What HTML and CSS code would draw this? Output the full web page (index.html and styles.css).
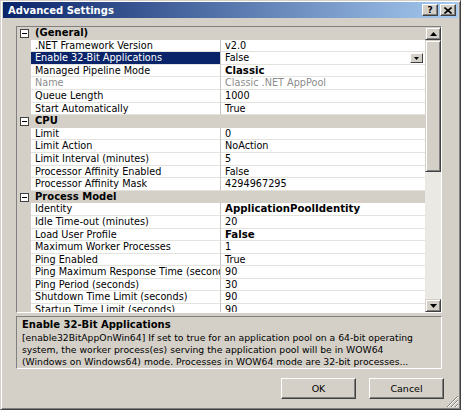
FILE: index.html
```html
<!DOCTYPE html>
<html lang="en">
<head>
  <meta charset="UTF-8">
  <meta name="viewport" content="width=device-width, initial-scale=1.0">
  <title>Advanced Settings</title>
  <link rel="stylesheet" href="styles.css">
</head>
<body>
  <div class="dialog">
    <div class="titlebar">
      <span class="title">Advanced Settings</span>
      <span class="caption-buttons">
        <span class="caption-btn help">?</span>
        <span class="caption-btn close">
          <svg width="8" height="7" viewBox="0 0 8 7"><path d="M0.5 0.5 L7.5 6.5 M7.5 0.5 L0.5 6.5" stroke="#000" stroke-width="1.6"/></svg>
        </span>
      </span>
    </div>

    <div class="dialog-body">
      <!-- Property grid -->
      <div class="grid">
        <div class="grid-rows">
          <div class="row category"><span class="gutter"><span class="expander"></span></span><span class="cat-name">(General)</span></div>
          <div class="row"><span class="gutter"></span><span class="name">.NET Framework Version</span><span class="value">v2.0</span></div>
          <div class="row selected"><span class="gutter"></span><span class="name">Enable 32-Bit Applications</span><span class="value">False<span class="drop-btn"><svg width="5" height="3" viewBox="0 0 5 3"><path d="M0 0 H5 L2.5 3 Z" fill="#000"/></svg></span></span></div>
          <div class="row"><span class="gutter"></span><span class="name">Managed Pipeline Mode</span><span class="value bold">Classic</span></div>
          <div class="row disabled"><span class="gutter"></span><span class="name">Name</span><span class="value">Classic .NET AppPool</span></div>
          <div class="row"><span class="gutter"></span><span class="name">Queue Length</span><span class="value">1000</span></div>
          <div class="row"><span class="gutter"></span><span class="name">Start Automatically</span><span class="value">True</span></div>

          <div class="row category"><span class="gutter"><span class="expander"></span></span><span class="cat-name">CPU</span></div>
          <div class="row"><span class="gutter"></span><span class="name">Limit</span><span class="value">0</span></div>
          <div class="row"><span class="gutter"></span><span class="name">Limit Action</span><span class="value">NoAction</span></div>
          <div class="row"><span class="gutter"></span><span class="name">Limit Interval (minutes)</span><span class="value">5</span></div>
          <div class="row"><span class="gutter"></span><span class="name">Processor Affinity Enabled</span><span class="value">False</span></div>
          <div class="row"><span class="gutter"></span><span class="name">Processor Affinity Mask</span><span class="value">4294967295</span></div>

          <div class="row category"><span class="gutter"><span class="expander"></span></span><span class="cat-name">Process Model</span></div>
          <div class="row"><span class="gutter"></span><span class="name">Identity</span><span class="value bold">ApplicationPoolIdentity</span></div>
          <div class="row"><span class="gutter"></span><span class="name">Idle Time-out (minutes)</span><span class="value">20</span></div>
          <div class="row"><span class="gutter"></span><span class="name">Load User Profile</span><span class="value bold">False</span></div>
          <div class="row"><span class="gutter"></span><span class="name">Maximum Worker Processes</span><span class="value">1</span></div>
          <div class="row"><span class="gutter"></span><span class="name">Ping Enabled</span><span class="value">True</span></div>
          <div class="row"><span class="gutter"></span><span class="name">Ping Maximum Response Time (seconds)</span><span class="value">90</span></div>
          <div class="row"><span class="gutter"></span><span class="name">Ping Period (seconds)</span><span class="value">30</span></div>
          <div class="row"><span class="gutter"></span><span class="name">Shutdown Time Limit (seconds)</span><span class="value">90</span></div>
          <div class="row"><span class="gutter"></span><span class="name">Startup Time Limit (seconds)</span><span class="value">90</span></div>
        </div>

        <div class="scrollbar">
          <span class="scroll-btn"><svg width="7" height="4" viewBox="0 0 7 4"><path d="M3.5 0 L7 4 H0 Z" fill="#000"/></svg></span>
          <span class="scroll-thumb"></span>
          <span class="scroll-track"></span>
          <span class="scroll-btn"><svg width="7" height="4" viewBox="0 0 7 4"><path d="M0 0 H7 L3.5 4 Z" fill="#000"/></svg></span>
        </div>
      </div>

      <!-- Description -->
      <div class="description">
        <div class="desc-title">Enable 32-Bit Applications</div>
        <div class="desc-text">[enable32BitAppOnWin64] If set to true for an application pool on a 64-bit operating<br>system, the worker process(es) serving the application pool will be in WOW64<br>(Windows on Windows64) mode. Processes in WOW64 mode are 32-bit processes...</div>
      </div>

      <div class="buttons">
        <button class="btn">OK</button>
        <button class="btn">Cancel</button>
      </div>
    </div>

    <svg class="grip" width="14" height="14" viewBox="0 0 14 14">
      <path d="M13 2 L2 13 M13 6 L6 13 M13 10 L10 13" stroke="#808080" stroke-width="1"/>
      <path d="M13 3 L3 13 M13 7 L7 13 M13 11 L11 13" stroke="#fff" stroke-width="1"/>
    </svg>
  </div>
</body>
</html>
```

FILE: styles.css
```css
/* General Styles */
body {
  margin: 0;
  background-color: #ffffff;
  font-family: "DejaVu Sans", Verdana, sans-serif;
  font-size: 9.7px;
  color: #000000;
}

.dialog {
  position: relative;
  width: 461px;
  height: 410px;
  box-sizing: border-box;
  background-color: #d4d0c8;
  border: 1px solid;
  border-color: #d4d0c8 #404040 #404040 #d4d0c8;
  box-shadow: inset 1px 1px 0 #ffffff, inset -1px -1px 0 #808080;
  padding: 1px;
  display: flex;
  flex-direction: column;
}

/* Title Bar */
.titlebar {
  height: 16px;
  margin: 0 1px;
  background: linear-gradient(to right, #0a246a, #a6caf0);
  display: flex;
  align-items: center;
  justify-content: space-between;
  padding: 0 2px 0 5px;
}

.title {
  color: #ffffff;
  font-weight: bold;
  font-size: 10px;
}

.caption-buttons {
  display: flex;
  gap: 2px;
}

.caption-btn {
  width: 16px;
  height: 12px;
  box-sizing: border-box;
  background-color: #d4d0c8;
  border: 1px solid;
  border-color: #ffffff #404040 #404040 #ffffff;
  box-shadow: inset -1px -1px 0 #808080;
  display: flex;
  align-items: center;
  justify-content: center;
  font-weight: bold;
  font-size: 9px;
  line-height: 1;
}

/* Dialog Body */
.dialog-body {
  padding: 8px 17px 0 14px;
  display: flex;
  flex-direction: column;
}

/* Property Grid */
.grid {
  display: flex;
  height: 287px;
  border: 1px solid;
  border-color: #808080 #ffffff #ffffff #808080;
  box-sizing: border-box;
}

.grid-rows {
  flex: 1;
  overflow: hidden;
  background-color: #ffffff;
}

.row {
  display: grid;
  grid-template-columns: 14px 190px 1fr;
  height: 12.6px;
  line-height: 12px;
  white-space: nowrap;
}

.gutter {
  background-color: #d4d0c8;
}

.name,
.value {
  border-bottom: 1px solid #e4e2dc;
  overflow: hidden;
  padding-left: 4px;
}

.name {
  border-right: 1px solid #c8c6c0;
}

.value {
  position: relative;
}

.bold {
  font-weight: bold;
  font-size: 10.2px;
}

.disabled .name,
.disabled .value {
  color: #8c8c8c;
}

.selected .name {
  background-color: #0a246a;
  color: #ffffff;
}

.category {
  background-color: #d4d0c8;
  font-weight: bold;
  font-size: 10px;
}

.category .gutter {
  display: flex;
  align-items: center;
  justify-content: center;
}

.cat-name {
  grid-column: 2 / 4;
  padding-left: 4px;
}

.expander {
  width: 9px;
  height: 9px;
  box-sizing: border-box;
  border: 1px solid #404040;
  background: linear-gradient(#000000, #000000) center / 5px 1px no-repeat, #ffffff;
}

.drop-btn {
  position: absolute;
  top: 1px;
  right: 2px;
  width: 13px;
  height: 10px;
  box-sizing: border-box;
  background-color: #d4d0c8;
  border: 1px solid;
  border-color: #ffffff #404040 #404040 #ffffff;
  display: flex;
  align-items: center;
  justify-content: center;
}

/* Scrollbar */
.scrollbar {
  width: 16px;
  display: flex;
  flex-direction: column;
  background-color: #ebe9e4;
}

.scroll-btn {
  height: 13px;
  box-sizing: border-box;
  background-color: #d4d0c8;
  border: 1px solid;
  border-color: #d4d0c8 #404040 #404040 #d4d0c8;
  box-shadow: inset 1px 1px 0 #ffffff, inset -1px -1px 0 #808080;
  display: flex;
  align-items: center;
  justify-content: center;
}

.scroll-thumb {
  height: 132px;
  box-sizing: border-box;
  background-color: #d4d0c8;
  border: 1px solid;
  border-color: #d4d0c8 #404040 #404040 #d4d0c8;
  box-shadow: inset 1px 1px 0 #ffffff, inset -1px -1px 0 #808080;
}

.scroll-track {
  flex: 1;
}

/* Description Panel */
.description {
  margin-top: 3px;
  height: 53px;
  box-sizing: border-box;
  border: 1px solid;
  border-color: #808080 #ffffff #ffffff #808080;
  padding: 2px 5px;
  line-height: 12px;
  white-space: nowrap;
  overflow: hidden;
}

.desc-title {
  font-weight: bold;
  font-size: 10px;
  margin-bottom: 1px;
}

.desc-text {
  font-size: 9.25px;
}

/* Buttons */
.buttons {
  display: flex;
  justify-content: flex-end;
  gap: 13px;
  margin-top: 9px;
  margin-right: -2px;
}

.btn {
  width: 75px;
  height: 21px;
  box-sizing: border-box;
  background-color: #d4d0c8;
  border: 1px solid;
  border-color: #ffffff #404040 #404040 #ffffff;
  box-shadow: inset -1px -1px 0 #808080;
  font-family: "DejaVu Sans", Verdana, sans-serif;
  font-size: 9.5px;
  padding: 0;
}

.grip {
  position: absolute;
  right: 1px;
  bottom: 1px;
}
```
